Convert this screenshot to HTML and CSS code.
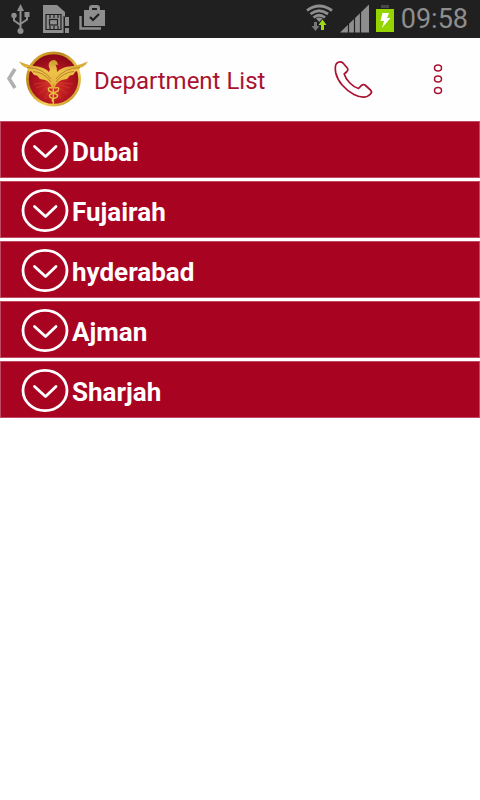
FILE: index.html
```html
<!DOCTYPE html>
<html lang="en">
<head>
<meta charset="utf-8">
<meta name="viewport" content="width=device-width, initial-scale=1">
<title>Department List</title>
<link rel="stylesheet" href="styles.css">
</head>
<body>
<svg width="0" height="0" class="defs" aria-hidden="true">
  <symbol id="expand" viewBox="0 0 48 43">
    <ellipse cx="24" cy="21.500" rx="22" ry="20.100" fill="none" stroke="#fff" stroke-width="2.800"/>
    <path d="M13.500 17.500 L24.500 27.500 L35 17.500" fill="none" stroke="#fff" stroke-width="2.800" stroke-linecap="round" stroke-linejoin="round"/>
  </symbol>
</svg>

<div class="status">
  <div class="status-group">
    <svg class="status-icon" width="110" height="38" viewBox="0 0 110 38" aria-hidden="true">
      <g fill="none" stroke="#8e8e8e" stroke-width="2">
        <path d="M20.500 9 V31 M14 16 V20.500 L20.500 25 M27 15 V19.500 L20.500 24"/>
      </g>
      <g fill="#8e8e8e">
        <path d="M20.500 4 L24 11 H17 Z"/>
        <circle cx="20.500" cy="31" r="3"/>
        <circle cx="14" cy="15.500" r="2.700"/>
        <rect x="24.500" y="12" width="5" height="5"/>
        <path d="M43 5 H57 L65 12 V17 H64 V33 H43 Z"/>
        <rect x="65" y="17" width="4" height="9"/>
        <rect x="65" y="28" width="4" height="5"/>
        <path d="M84 10 H89 V8 Q89 5 92 5 H97 Q100 5 100 8 V10 H105 V26 H84 Z"/>
      </g>
      <path d="M64 16 V33" stroke="#202020" stroke-width="1"/>
      <g fill="none" stroke="#202020" stroke-width="1.200">
        <path d="M46 14.500 H61 M46 29.500 H61 M46 14 V30 M61 14 V30 M50 15 V18 M54 15 V18 M58 15 V18 M50 26 V29 M54 26 V29 M58 26 V29"/>
        <rect x="49.500" y="19.500" width="8" height="5.500"/>
      </g>
      <path d="M92 10 V8 H97 V10 Z" fill="#202020"/>
      <path d="M90 17 L93 20 L99 14" fill="none" stroke="#202020" stroke-width="2.200"/>
      <path d="M80.500 16 V28.500 H101" fill="none" stroke="#8e8e8e" stroke-width="2.400"/>
    </svg>
  </div>
  <div class="status-group">
    <svg class="status-icon" width="96" height="38" viewBox="304 0 96 38" aria-hidden="true">
      <g fill="none" stroke="#8e8e8e" stroke-width="2.800">
        <path d="M306 10.500 Q318 1.500 331 10.500"/>
        <path d="M309.500 14 Q318 7.500 327 14"/>
        <path d="M312.500 17.500 Q318 13 324 17.500"/>
      </g>
      <path d="M315 18.500 Q318 16.500 321.500 18.500 L318.300 22 Z" fill="#8e8e8e"/>
      <path d="M313 22 H316 V26 H318.500 L314.500 31 L310.500 26 H313 Z" fill="#777"/>
      <path d="M320 30 H323 V25 H325.500 L321.500 19.500 L317.500 25 H320 Z" fill="#9bdc12"/>
      <path d="M339 32.500 L368 4.500 V32.500 Z" fill="#8e8e8e"/>
      <path d="M347.500 22 V33 M353.500 16 V33 M359.500 10 V33" stroke="#202020" stroke-width="1.200"/>
      <rect x="380" y="5" width="8" height="3" fill="#484848"/>
      <rect x="375" y="9" width="18" height="23" fill="#94d500"/>
      <path d="M381.500 13 H388 L386 18 H389.500 L381 28 L383 21 H379.500 Z" fill="#fff"/>
    </svg>
    <time class="clock">09:58</time>
  </div>
</div>

<header class="bar">
  <a class="home" href="#" aria-label="Back">
    <svg width="94" height="65" viewBox="0 47 94 65" aria-hidden="true">
      <defs>
        <linearGradient id="gold" x1="0" y1="0" x2="1" y2="1">
          <stop offset="0" stop-color="#e3b52f"/><stop offset=".35" stop-color="#bd861c"/>
          <stop offset=".65" stop-color="#f3d25b"/><stop offset="1" stop-color="#b67c17"/>
        </linearGradient>
        <linearGradient id="wing" x1="0" y1="0" x2="0" y2="1">
          <stop offset="0" stop-color="#c99a2c"/><stop offset=".4" stop-color="#eec34a"/><stop offset="1" stop-color="#e3b23a"/>
        </linearGradient>
        <radialGradient id="ruby" cx=".5" cy=".65" r=".6">
          <stop offset="0" stop-color="#d93526"/><stop offset=".55" stop-color="#b61620"/><stop offset="1" stop-color="#8e0a18"/>
        </radialGradient>
      </defs>
      <path d="M15 69 L9 78.500 L15 88" fill="none" stroke="#b0b0b0" stroke-width="3.600"/>
      <circle cx="53.500" cy="79" r="27.500" fill="url(#gold)"/>
      <circle cx="53.500" cy="79" r="24.800" fill="url(#ruby)"/>
      <path d="M53 82 L36 88 M53 82 L39 94 M53 82 L45 99 M53 82 L70 88 M53 82 L67 94 M53 82 L61 99 M53 82 L34 84 M53 82 L73 84" stroke="#dc5138" stroke-width=".7" opacity=".6"/>
      <g fill="url(#wing)">
        <path d="M19 61.500 Q30 66 38 66.500 Q46 68 49 72 L50 69 Q48 67 49 63 Q51 59.500 54.500 60 Q57.500 61 58 65 L55.500 64.500 Q57 67 57 72 Q62 67 69 66.500 Q77 66 88 61.500 Q86 65 82 67.500 H80.500 L78 71 L75.500 71.500 L73 75 L70 75.500 L67 79 L62 80 Q56 82 54.500 88 H52 Q50.500 82 45 80 L40 79 L37 75.500 L34 75 L31.500 71.500 L29 71 L26.500 67.500 H25 Q21 65 19 61.500 Z"/>
        <rect x="52.600" y="84" width="1.500" height="20"/>
      </g>
      <path d="M27 67.500 Q43 68 51 79 M33 71.500 Q44 72 51 82 M80 67.500 Q64 68 56 79 M74 71.500 Q63 72 56 82" fill="none" stroke="#a8651b" stroke-width=".7"/>
      <path d="M52.500 88 Q46.500 86.500 49 91 L57 94.500 Q59 97.500 53.500 98.500 Q51 100 53.500 102 M54.500 88 Q60.500 86.500 58 91 L50 94.500 Q48 97.500 53.500 98.500" fill="none" stroke="#e9bd42" stroke-width="1.500"/>
    </svg>
  </a>
  <h1 class="title">Department List</h1>
  <button class="action" type="button" aria-label="Call">
    <svg width="44" height="45" viewBox="331 57 44 45" aria-hidden="true">
      <path d="M336.500 63.500 Q340 60.300 343 63 L347.500 68.300 Q348.500 70 347 71.500 L344.200 74 C346 80 352 86.500 358.500 88.500 L361.500 85.300 Q363 84 365 85 L370.500 90 Q372.500 92 370.500 94 C367 98 361 98 354 94.500 C345 90 337.500 81 335.800 73 Q334.500 66 336.500 63.500 Z" fill="none" stroke="#a91230" stroke-width="1.700" stroke-linejoin="round"/>
    </svg>
  </button>
  <button class="action" type="button" aria-label="More options">
    <svg width="44" height="45" viewBox="416 57 44 45" aria-hidden="true">
      <g fill="none" stroke="#a91230" stroke-width="1.500">
        <ellipse cx="438" cy="68" rx="3.500" ry="3"/>
        <ellipse cx="438" cy="79" rx="3.500" ry="3"/>
        <ellipse cx="438" cy="90.500" rx="3.500" ry="3"/>
      </g>
    </svg>
  </button>
</header>

<main>
  <ul class="list">
    <li><button class="row" type="button" aria-expanded="false"><svg class="expand" aria-hidden="true"><use href="#expand"/></svg><span class="name">Dubai</span></button></li>
    <li><button class="row" type="button" aria-expanded="false"><svg class="expand" aria-hidden="true"><use href="#expand"/></svg><span class="name">Fujairah</span></button></li>
    <li><button class="row" type="button" aria-expanded="false"><svg class="expand" aria-hidden="true"><use href="#expand"/></svg><span class="name">hyderabad</span></button></li>
    <li><button class="row" type="button" aria-expanded="false"><svg class="expand" aria-hidden="true"><use href="#expand"/></svg><span class="name">Ajman</span></button></li>
    <li><button class="row" type="button" aria-expanded="false"><svg class="expand" aria-hidden="true"><use href="#expand"/></svg><span class="name">Sharjah</span></button></li>
  </ul>
</main>
</body>
</html>
```
FILE: styles.css
```css
* {
  box-sizing: border-box;
}

body {
  margin: 0;
  background: #fff;
  font-family: Roboto, "Liberation Sans", sans-serif;
}

svg {
  display: block;
  flex: none;
}

.defs {
  position: absolute;
}

button {
  border: 0;
  margin: 0;
  padding: 0;
  background: none;
  font: inherit;
  cursor: pointer;
}

.status {
  display: flex;
  justify-content: space-between;
  height: 38px;
  background: #202020;
  color: #8e8e8e;
}

.status-group {
  display: flex;
  align-items: center;
}

.clock {
  padding-right: 12px;
  font-size: 27px;
  line-height: 38px;
}

.bar {
  display: flex;
  align-items: center;
  height: 83px;
  padding-right: 20px;
  background: #fefefe;
}

.home {
  display: block;
}

.title {
  flex: 1;
  margin: 0;
  padding-top: 3px;
  color: #a91230;
  font-size: 24px;
  font-weight: 400;
  line-height: 32px;
}

.action {
  width: 44px;
  height: 45px;
}

.action + .action {
  margin-left: 41px;
}

.list {
  display: flex;
  flex-direction: column;
  gap: 3px;
  margin: 0;
  padding: 0;
  list-style: none;
}

.row {
  display: flex;
  align-items: center;
  gap: 3px;
  width: 100%;
  height: 57px;
  padding: 2px 20px 0;
  border: 1px solid #c04a62;
  background: #a90322;
  color: #fff;
  font-size: 26px;
  font-weight: 700;
  line-height: 32px;
  text-align: left;
}

.name {
  padding-top: 2px;
}

.expand {
  width: 48px;
  height: 43px;
}
```
